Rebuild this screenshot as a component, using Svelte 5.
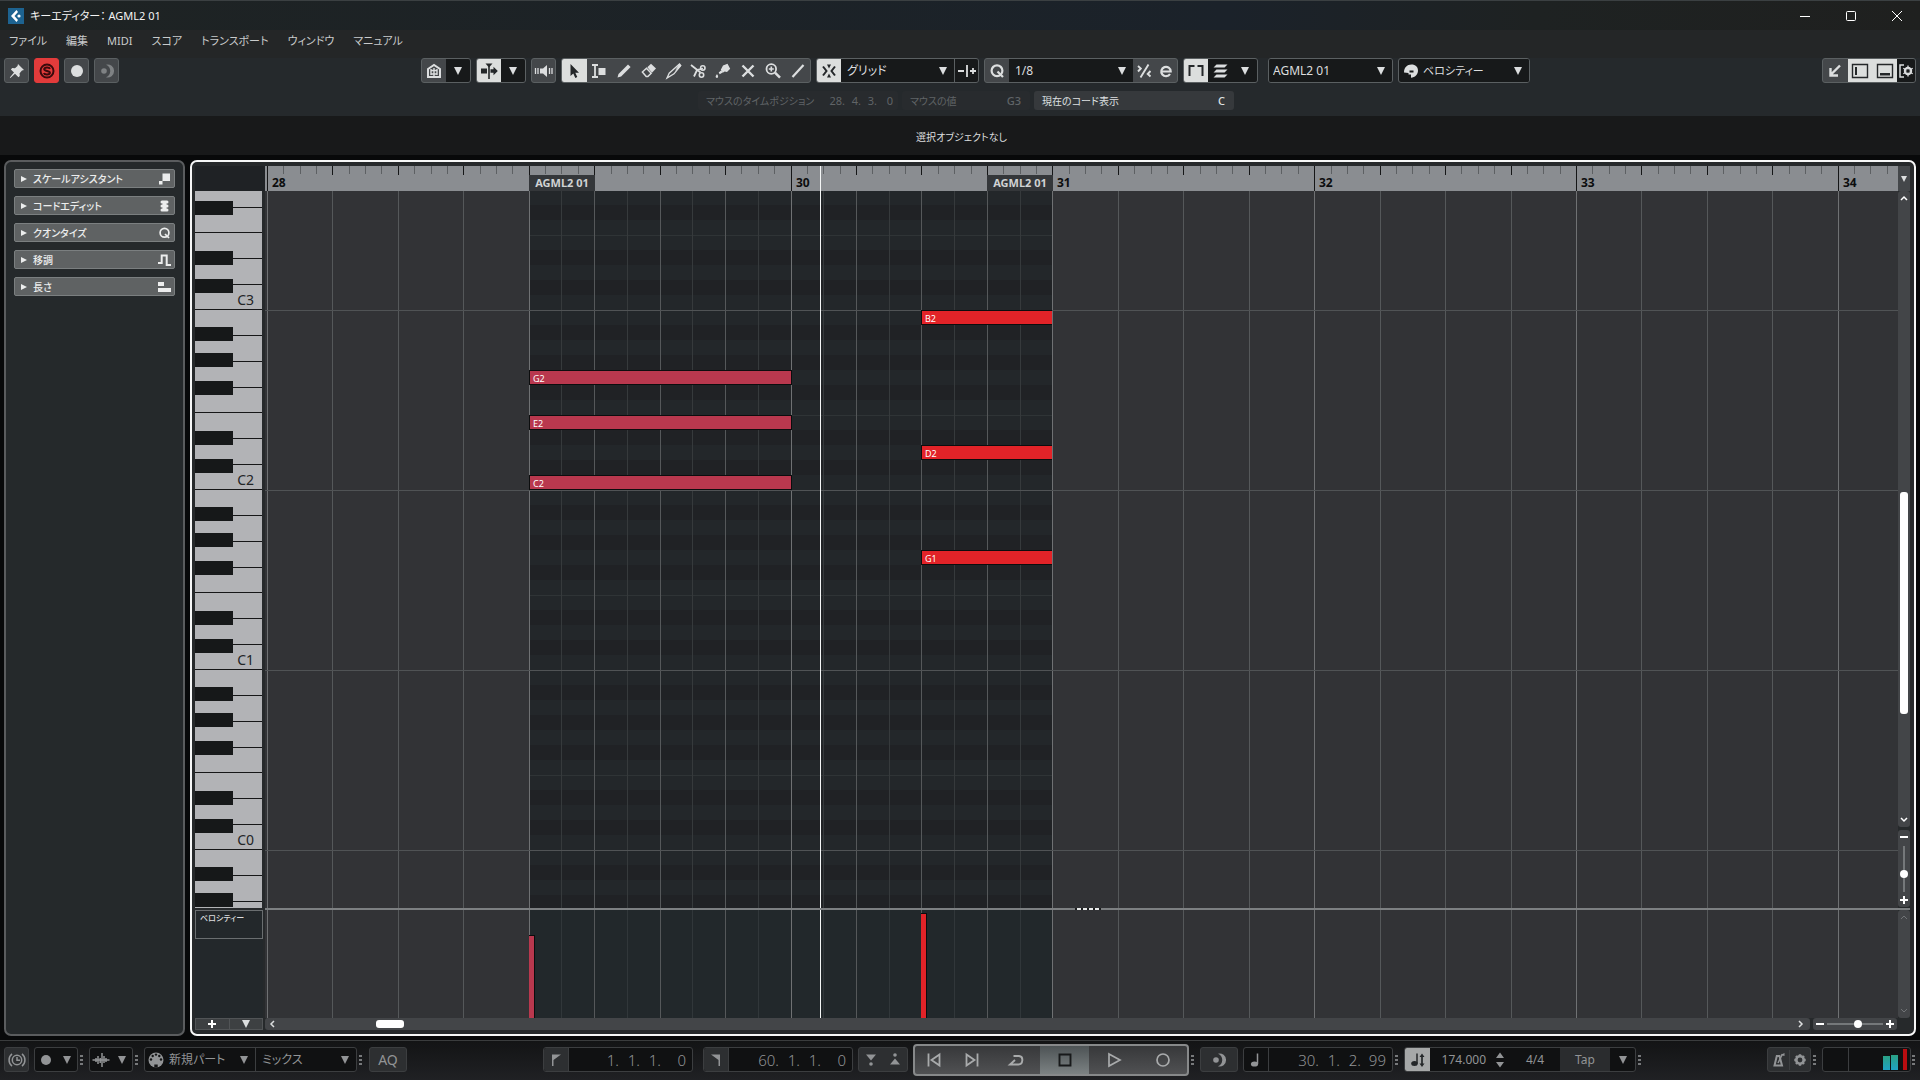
<script>
  const menus = ['ファイル', '編集', 'MIDI', 'スコア', 'トランスポート', 'ウィンドウ', 'マニュアル'];

  const sections = [
    { name: 'スケールアシスタント', icon: 'scale' },
    { name: 'コードエディット', icon: 'chord' },
    { name: 'クオンタイズ', icon: 'quantize' },
    { name: '移調', icon: 'transpose' },
    { name: '長さ', icon: 'length' }
  ];

  const tools = [
    { name: '選択', icon: 'arrow' },
    { name: 'トリム', icon: 'trim' },
    { name: '鉛筆', icon: 'pencil' },
    { name: '消しゴム', icon: 'eraser' },
    { name: 'ナイフ', icon: 'knife' },
    { name: 'はさみ', icon: 'scissors' },
    { name: 'のり', icon: 'glue' },
    { name: 'ミュート', icon: 'cross' },
    { name: 'ズーム', icon: 'zoom' },
    { name: 'ライン', icon: 'line' }
  ];

  // Time axis: x of bar 28 inside the lanes and the width of one beat
  const ORIGIN = 1.95;
  const BEAT = 65.45;
  const ROW = 15;
  const C3_BOTTOM = 119;
  const BEATS = 64;

  const beatX = (beat) => Math.round(ORIGIN + beat * BEAT);

  const partStart = beatX(4);
  const partEnd = beatX(12);
  const playhead = 555;

  const beats = Array.from({ length: BEATS }, (_, i) => i);
  const ticks = Array.from({ length: BEATS * 4 }, (_, i) => i);
  // bar 29 has no number, the part label sits there
  const bars = [28, 30, 31, 32, 33, 34];
  const halfBeats = [4, 5, 6, 7, 8, 9, 10, 11].map((b) => b + 0.5);

  const octaves = ['C3', 'C2', 'C1', 'C0', ''];
  const blackRows = [1, 3, 5, 8, 10];

  // row counts semitones down from B2
  const notes = [
    { name: 'G2', row: 4, start: 4, end: 8, soft: true },
    { name: 'E2', row: 7, start: 4, end: 8, soft: true },
    { name: 'C2', row: 11, start: 4, end: 8, soft: true },
    { name: 'B2', row: 0, start: 10, end: 12 },
    { name: 'D2', row: 9, start: 10, end: 12 },
    { name: 'G1', row: 16, start: 10, end: 12 }
  ];

  const velocities = [
    { start: 4, height: 83, soft: true },
    { start: 10, height: 105 }
  ];

  const icons = {
    pin: '<path d="M11 3l6 6-2 .6-2.400 2.600.2 2.800-1.300 1.300-3.500-3.500L3.400 17l-.6-.6L7 11.500 3.900 8.400l1.300-1.300 2.800.2L10.500 5z" fill="currentColor"/>',
    solo: '<circle cx="10" cy="10" r="6.500" fill="none" stroke="currentColor" stroke-width="2"/><path d="M13 7.800C12.300 6 7.400 6 7.200 8.200c0 2.100 5.600 1.300 5.700 3.500C12.800 14 7.500 14 6.900 12" fill="none" stroke="currentColor" stroke-width="2"/>',
    dot: '<circle cx="10" cy="10" r="6" fill="currentColor"/>',
    smallDot: '<circle cx="10" cy="10" r="5" fill="currentColor"/>',
    moon: '<path d="M9 3.700A6.500 6.500 0 1 1 9 16.300 6.800 6.800 0 0 0 9 3.700z" fill="currentColor"/><circle cx="7" cy="10" r="2.800" fill="currentColor"/>',
    house: '<path d="M4 8l6-4 6 4v8H4z" fill="none" stroke="currentColor" stroke-width="2"/><path d="M6.500 9.500h7M6.500 13h7M10 7v8M7 8v6M13 8v6" stroke="currentColor" stroke-width="1.400"/>',
    autoscroll: '<path d="M6.500 2.500h7L10 6.500z" fill="currentColor"/><path d="M10 4v14" stroke="currentColor" stroke-width="1.600"/><path d="M2 7.500h6v5H2zM11.500 8.300h3V5.800l4.300 4.200-4.300 4.200v-2.500h-3z" fill="currentColor"/>',
    speaker: '<path d="M6 7.500h3L13 4v12l-4-3.500H6z" fill="currentColor"/><path d="M1.500 7v6M4 7v6M15.500 7v6M18 7v6" stroke="currentColor" stroke-width="1.300"/>',
    arrow: '<path d="M6.500 3v12l2.800-2.600 2 4.600 2-.9-2-4.400h3.700z" fill="currentColor"/>',
    trim: '<path d="M3 4h6M3 16h6M6 4v12" stroke="currentColor" stroke-width="1.800"/><path d="M9.500 7h7v7h-7z" fill="currentColor"/>',
    pencil: '<path d="M3.500 16.500l1-3.600L14 3.400l2.600 2.600-9.500 9.500z" fill="currentColor"/>',
    eraser: '<path d="M8.300 6.200L12 2.800l5 4.700-4 4.200z" fill="currentColor"/><path d="M7.500 7.200L3.400 11l3.800 4.600h1.700l3.300-3.300z" fill="none" stroke="currentColor" stroke-width="1.500"/>',
    knife: '<path d="M3 17l2.200-4.800L15.500 3l1.300 1.500-6.800 8.300z" fill="none" stroke="currentColor" stroke-width="1.300"/><path d="M15 3l2 2-6 5z" fill="currentColor"/>',
    scissors: '<path d="M3 4l9.500 7.500M6 15.500L9 9l6-1.500" stroke="currentColor" stroke-width="1.800" fill="none"/><circle cx="14.800" cy="7" r="2.200" fill="none" stroke="currentColor" stroke-width="1.600"/><circle cx="13.500" cy="14" r="2.200" fill="none" stroke="currentColor" stroke-width="1.600"/>',
    glue: '<path d="M10 4.500l4.500-1.700 2.700 5L14 11l-2.300-.6-1.900 1.400-2-3z" fill="currentColor"/><path d="M8.300 9.300l1.400 2.300-3 1.700-1-1.900zM4 13.300c1.300 1.300 1.700 3.500 0 3.700-1.900-.1-1.600-2.300 0-3.700z" fill="currentColor"/>',
    cross: '<path d="M4.500 4.500l11 11M15.500 4.500l-11 11" stroke="currentColor" stroke-width="2.400"/>',
    zoom: '<circle cx="8.300" cy="8" r="4.800" fill="none" stroke="currentColor" stroke-width="1.800"/><path d="M12 11.700l5 5" stroke="currentColor" stroke-width="2.400"/><path d="M8.300 5.500v5M5.800 8h5" stroke="currentColor" stroke-width="1.600"/>',
    line: '<path d="M4.500 16L15.500 4" stroke="currentColor" stroke-width="2.200"/>',
    snap: '<path d="M4 5.500L7.500 10 4 14.500M16 5.500L12.500 10l3.500 4.500" fill="none" stroke="currentColor" stroke-width="2"/><path d="M8 3.500h4L10 7.500zM8 16.500h4L10 12.500z" fill="currentColor"/>',
    snapType: '<path d="M1 10h6M13 10h6M16 7v6M10 4v12" stroke="currentColor" stroke-width="1.800"/>',
    quantizeBig: '<circle cx="10" cy="9.700" r="5.400" fill="none" stroke="currentColor" stroke-width="2.200"/><path d="M10.500 10.500l5.500 5.500" stroke="currentColor" stroke-width="2.200"/>',
    iq: '<path d="M14.500 3.500l-8 13M4 5l2.800 2.500L4 10.500M16.500 10l-2.800 3 2.800 2.500" fill="none" stroke="currentColor" stroke-width="1.900"/>',
    edit: '<path d="M5.500 10.500h9.200A4.700 4.700 0 1 0 14 13" fill="none" stroke="currentColor" stroke-width="2.200"/>',
    borders: '<path d="M3.500 15V5h5M16.500 15V5h-5" fill="none" stroke="currentColor" stroke-width="2"/>',
    layers: '<path d="M6.500 3.500h11l-3 3h-11zM6.500 8.500h11l-3 3h-11zM6.500 13.500h11l-3 3h-11z" fill="currentColor"/>',
    mask: '<path d="M10.500 3.500c4 0 6.500 2.500 6.500 6 0 4-3 7-7 7.300v-3.300H7.500V12L3 11.500C3 6.500 6 3.500 10.500 3.500z" fill="currentColor"/><path d="M8.500 9.500h4v2h-4z" fill="#17191a"/>',
    openWin: '<path d="M15 4.500L6.500 13M5.500 7v7.500H13" fill="none" stroke="currentColor" stroke-width="2.400"/>',
    zoneLeft: '<path d="M2.500 3.500h15v13h-15z" fill="none" stroke="currentColor" stroke-width="1.400"/><path d="M5 6h2v8H5z" fill="currentColor"/>',
    zoneLow: '<path d="M2.500 3.500h15v13h-15z" fill="none" stroke="currentColor" stroke-width="1.400"/><path d="M5 12h10v2.500H5z" fill="currentColor"/>',
    setup: '<path d="M8 4H4v12h4" fill="none" stroke="currentColor" stroke-width="1.500"/><circle cx="12" cy="10" r="3.200" fill="none" stroke="currentColor" stroke-width="2"/><path d="M12 4.500v11M7.300 7.300l9.400 5.400M16.700 7.300l-9.400 5.400" stroke="currentColor" stroke-width="1.300"/><circle cx="12" cy="10" r="1.700" fill="#1b1d1e"/>',
    scale: '<path d="M8.500 4.500H16V12H8.500zM5 12h3.500v3.500H5z" fill="currentColor"/>',
    chord: '<rect x="6.500" y="4.500" width="8" height="3" rx="1.500" fill="currentColor"/><rect x="6.500" y="8.500" width="8" height="3" rx="1.500" fill="currentColor"/><rect x="6.500" y="12.500" width="8" height="3" rx="1.500" fill="currentColor"/><path d="M8.500 5h4v10h-4z" fill="currentColor"/>',
    quantize: '<circle cx="10.500" cy="9.800" r="4.400" fill="none" stroke="currentColor" stroke-width="1.700"/><path d="M11 11l4 4" stroke="currentColor" stroke-width="1.700"/>',
    transpose: '<path d="M4 13h3.700V5.500h5V15H17" fill="none" stroke="currentColor" stroke-width="2"/>',
    length: '<path d="M4 5h6v4H4zM4 11h13v4H4z" fill="currentColor"/>',
    clock: '<circle cx="10" cy="10" r="4.700" fill="none" stroke="currentColor" stroke-width="1.500"/><path d="M10 7v3.300h3M5 3.800a8 8 0 0 0 0 12.400M15 3.800a8 8 0 0 1 0 12.400" fill="none" stroke="currentColor" stroke-width="1.500"/>',
    wave: '<path d="M1.500 10h17M5 8v4M7 6v8M9.200 8v5M11 3v14M13 6v7M15 8v4" stroke="currentColor" stroke-width="1.500"/>',
    midi: '<circle cx="10" cy="10" r="7.500" fill="currentColor"/><g fill="#141516"><circle cx="5" cy="9.500" r="1.200"/><circle cx="6.700" cy="6" r="1.200"/><circle cx="10" cy="4.600" r="1.200"/><circle cx="13.300" cy="6" r="1.200"/><circle cx="15" cy="9.500" r="1.200"/><path d="M8.300 14.500h3.400v3H8.300z"/></g>',
    leftLoc: '<path d="M6 4.500h9L7.500 10v6H6z" fill="currentColor"/>',
    rightLoc: '<path d="M14 4.500H5l7.500 5.500v6H14z" fill="currentColor"/>',
    punchIn: '<path d="M5 4.500h10L10 10.500z" fill="currentColor"/><circle cx="10" cy="14" r="1.800" fill="currentColor"/>',
    punchOut: '<path d="M5 14.500h10L10 8.500z" fill="currentColor"/><circle cx="10" cy="5" r="1.800" fill="currentColor"/>',
    prev: '<path d="M4.500 3.500v13M15.500 4.500v11l-8-5.500z" fill="none" stroke="currentColor" stroke-width="1.800"/>',
    next: '<path d="M15.500 3.500v13M4.500 4.500v11l8-5.500z" fill="none" stroke="currentColor" stroke-width="1.800"/>',
    cycle: '<path d="M7.500 6H13c5 .5 4 8.500-.5 8.500H4l5-4.500" fill="none" stroke="currentColor" stroke-width="1.900"/>',
    stop: '<path d="M4.500 4.500h11v11h-11z" fill="none" stroke="currentColor" stroke-width="1.900"/>',
    play: '<path d="M5 4l11 6-11 6z" fill="none" stroke="currentColor" stroke-width="1.700"/>',
    record: '<circle cx="10" cy="10" r="6" fill="none" stroke="currentColor" stroke-width="1.700"/>',
    note: '<ellipse cx="8.500" cy="14" rx="3.600" ry="2.600" fill="currentColor"/><path d="M11.500 3.500V14" stroke="currentColor" stroke-width="1.500"/>',
    tempo: '<ellipse cx="6.500" cy="13.500" rx="3.300" ry="2.500" fill="currentColor"/><path d="M9 3.500v10" stroke="currentColor" stroke-width="1.500"/><path d="M14 5v10" stroke="currentColor" stroke-width="1.700"/><path d="M11.500 7L14 3.500 16.500 7zM11.500 13.500L14 17l2.500-3.500z" fill="currentColor"/>',
    spin: '<path d="M6 8l4-5.500L14 8zM6 12l4 5.500 4-5.500z" fill="currentColor"/>',
    metronome: '<path d="M6.500 15.500L8.800 6h2.700l2.500 9.500z" fill="none" stroke="currentColor" stroke-width="2"/><path d="M10 13l4.500-9" stroke="currentColor" stroke-width="1.500"/><path d="M12.500 5l4-2v3z" fill="currentColor"/>',
    gear: '<circle cx="10" cy="10" r="3.700" fill="none" stroke="currentColor" stroke-width="2.600"/><path d="M10 4.300v2.400M10 13.300v2.400M4.300 10h2.400M13.300 10h2.400M6 6l1.600 1.600M12.400 12.400L14 14M14 6l-1.600 1.600M7.600 12.400L6 14" stroke="currentColor" stroke-width="2.400"/>'
  };

  let hZoom = 56;
  let vZoom = 65;
</script>

{#snippet icon(name)}
  <svg class="icon" width="20" height="20" viewBox="0 0 20 20" aria-hidden="true">{@html icons[name]}</svg>
{/snippet}

{#snippet caret()}
  <svg class="caret" width="8" height="8" viewBox="0 0 8 8" aria-hidden="true"><path d="M0 0h8L4 8z" fill="currentColor" /></svg>
{/snippet}

{#snippet grip()}
  <span class="grip"><i></i><i></i><i></i></span>
{/snippet}

{#snippet beatLines(halfColor)}
  {#each halfBeats as b}
    <rect x={beatX(b)} y="0" width="1" height="100%" fill={halfColor} />
  {/each}
  {#each beats as b}
    <rect x={beatX(b)} y="0" width="1" height="100%" fill={b % 4 === 0 ? '#6f7173' : '#55585a'} />
  {/each}
{/snippet}

<div class="app">
  <header class="titlebar">
    <svg width="16" height="16" viewBox="0 0 16 16" aria-hidden="true">
      <rect width="16" height="16" fill="#1d6390" />
      <path d="M8.500 2L3 8l5.500 6 1.500-2L6.500 8 10 4z" fill="#fff" />
      <circle cx="11" cy="8" r="1.600" fill="#fff" />
    </svg>
    <h1>キーエディター： AGML2 01</h1>
    <div class="window-buttons">
      <button aria-label="最小化"><svg width="12" height="12" viewBox="0 0 12 12"><path d="M1 6.500h10" stroke="#fff" /></svg></button>
      <button aria-label="最大化"><svg width="12" height="12" viewBox="0 0 12 12"><rect x="1.500" y="1.500" width="9" height="9" rx="1" fill="none" stroke="#fff" /></svg></button>
      <button aria-label="閉じる"><svg width="12" height="12" viewBox="0 0 12 12"><path d="M1 1l10 10M11 1L1 11" stroke="#fff" /></svg></button>
    </div>
  </header>

  <nav class="menubar">
    {#each menus as menu}
      <button>{menu}</button>
    {/each}
  </nav>

  <div class="toolbar">
    <div class="tool-left">
      <button class="box" aria-label="ピン">{@render icon('pin')}</button>
      <button class="box solo" aria-label="ソロ">{@render icon('solo')}</button>
      <button class="box" aria-label="録音">{@render icon('dot')}</button>
      <button class="box dim" aria-label="レトロスペクティブ録音">{@render icon('moon')}</button>
    </div>

    <div class="tool-center">
      <div class="group pair">
        <button aria-label="表示">{@render icon('house')}</button>
        <button class="dark" aria-label="表示メニュー">{@render caret()}</button>
      </div>
      <div class="group pair">
        <button class="on" aria-label="自動スクロール">{@render icon('autoscroll')}</button>
        <button class="dark" aria-label="スクロールメニュー">{@render caret()}</button>
      </div>
      <button class="box" aria-label="試聴">{@render icon('speaker')}</button>
      <div class="group tools">
        {#each tools as tool, i}
          <button class:on={i === 0} aria-label={tool.name}>{@render icon(tool.icon)}</button>
        {/each}
      </div>
      <div class="group snap">
        <button class="on" aria-label="スナップ">{@render icon('snap')}</button>
        <div class="picker">
          <select aria-label="スナップタイプ"><option>グリッド</option></select>
          {@render caret()}
        </div>
        <button class="dark divided" aria-label="グリッドタイプ">{@render icon('snapType')}</button>
      </div>
      <div class="group quant">
        <button aria-label="クオンタイズ適用">{@render icon('quantizeBig')}</button>
        <div class="picker">
          <select aria-label="クオンタイズ値"><option>1/8</option></select>
          {@render caret()}
        </div>
        <button aria-label="ソフトクオンタイズ">{@render icon('iq')}</button>
        <button aria-label="クオンタイズパネル">{@render icon('edit')}</button>
      </div>
      <div class="group parts">
        <button class="on" aria-label="パート境界">{@render icon('borders')}</button>
        <button class="dark" aria-label="アクティブパート">{@render icon('layers')}</button>
        <button class="dark" aria-label="パートメニュー">{@render caret()}</button>
      </div>
      <div class="group part-name">
        <div class="picker">
          <select aria-label="パート"><option>AGML2 01</option></select>
          {@render caret()}
        </div>
      </div>
      <div class="group colors">
        <span class="lead">{@render icon('mask')}</span>
        <div class="picker tight">
          <select aria-label="カラー"><option>ベロシティー</option></select>
          {@render caret()}
        </div>
      </div>
    </div>

    <div class="group zones">
      <button aria-label="別ウィンドウ">{@render icon('openWin')}</button>
      <button class="on" aria-label="左ゾーン">{@render icon('zoneLeft')}</button>
      <button class="on" aria-label="下ゾーン">{@render icon('zoneLow')}</button>
      <button class="dark setup" aria-label="設定">{@render icon('setup')}</button>
    </div>
  </div>

  <div class="readouts">
    <div class="readout time"><span>マウスのタイムポジション</span><span class="fields"><b>28.</b><b>4.</b><b>3.</b><b>0</b></span></div>
    <div class="readout pitch"><span>マウスの値</span><span class="value">G3</span></div>
    <div class="readout chord"><span>現在のコード表示</span><span class="value">C</span></div>
  </div>

  <div class="infoline">選択オブジェクトなし</div>

  <main>
    <aside>
      {#each sections as section}
        <button class="section">
          <svg width="6" height="6" viewBox="0 0 6 6" aria-hidden="true"><path d="M0 0l6 3-6 3z" fill="currentColor" /></svg>
          <span>{section.name}</span>
          {@render icon(section.icon)}
        </button>
      {/each}
    </aside>

    <section class="editor">
      <div class="corner"></div>
      <div class="ruler">
        <svg class="fill" aria-hidden="true">
          {#each ticks as t}
            <rect x={beatX(t / 4)} y="0" width="1" height={t % 16 === 0 ? 25 : t % 4 === 0 ? 9 : 8} fill={t % 4 === 0 ? '#151617' : '#5d6063'} />
          {/each}
        </svg>
        {#each bars as bar}
          <span class="bar" style:left="{beatX((bar - 28) * 4) + 5}px">{bar}</span>
        {/each}
        <span class="part" style:left="{partStart}px">AGML2 01</span>
        <span class="part" style:left="{beatX(11)}px">AGML2 01</span>
        <i class="playhead" style:left="{playhead}px"></i>
      </div>
      <button class="ruler-menu" aria-label="ルーラー">{@render caret()}</button>

      <div class="keyboard">
        <div class="keys">
          {#each octaves as octave}
            <div class="octave">
              {#each ['B', 'A', 'G', 'F', 'E', 'D', 'C'] as key}
                <div class="white" class:short={key === 'F' || key === 'C'}>{key === 'C' ? octave : ''}</div>
              {/each}
              {#each [17, 43, 71, 121, 149] as top}
                <i class="black" style:top="{top}px"></i>
              {/each}
            </div>
          {/each}
        </div>
      </div>
      <div class="lane">
        <svg class="fill" aria-hidden="true">
          <rect x={partStart} y="0" width={partEnd - partStart} height="100%" fill="#23272a" />
          {#each octaves as _, o}
            {#each blackRows as r}
              <rect x={partStart} y={C3_BOTTOM + (o - 1) * 180 + r * ROW} width={partEnd - partStart} height={ROW} fill="#202225" />
            {/each}
            <rect x={partStart} y={C3_BOTTOM - 75 + o * 180} width={partEnd - partStart} height="1" fill="#2f3436" />
          {/each}
          {@render beatLines('#363a3c')}
          {#each octaves as _, o}
            <rect x="0" y={C3_BOTTOM + o * 180} width="100%" height="1" fill="#505355" />
          {/each}
        </svg>
        {#each notes as note}
          <div
            class="note"
            class:soft={note.soft}
            style:left="{beatX(note.start)}px"
            style:top="{C3_BOTTOM + note.row * ROW}px"
            style:width="{beatX(note.end) - beatX(note.start) + (note.soft ? 1 : 0)}px"
          >{note.name}</div>
        {/each}
        <i class="playhead" style:left="{playhead}px"></i>
      </div>
      <div class="side">
        <div class="vscroll">
          <svg width="8" height="6" viewBox="0 0 8 6"><path d="M1 5l3-3 3 3" fill="none" stroke="currentColor" stroke-width="1.500" /></svg>
          <i class="thumb"></i>
          <svg width="8" height="6" viewBox="0 0 8 6"><path d="M1 1l3 3 3-3" fill="none" stroke="currentColor" stroke-width="1.500" /></svg>
        </div>
        <div class="vzoom">
          <button class="minus" aria-label="縦ズームアウト"></button>
          <input type="range" aria-label="縦ズーム" bind:value={vZoom} />
          <button class="minus plus" aria-label="縦ズームイン"></button>
        </div>
      </div>

      <div class="splitter"><span><i></i><i></i><i></i><i></i></span></div>

      <div class="lane-head"><div class="lane-name">ベロシティー</div></div>
      <div class="lane">
        <svg class="fill" aria-hidden="true">
          <rect x={partStart} y="0" width={partEnd - partStart} height="100%" fill="#22282b" />
          {@render beatLines('#31373a')}
        </svg>
        {#each velocities as v}
          <i class="velocity" class:soft={v.soft} style:left="{beatX(v.start)}px" style:height="{v.height}px"></i>
        {/each}
        <i class="playhead" style:left="{playhead}px"></i>
      </div>
      <div class="vscroll off">
        <svg width="8" height="6" viewBox="0 0 8 6"><path d="M1 5l3-3 3 3" fill="none" stroke="currentColor" /></svg>
        <svg width="8" height="6" viewBox="0 0 8 6"><path d="M1 1l3 3 3-3" fill="none" stroke="currentColor" /></svg>
      </div>

      <div class="lane-buttons">
        <button aria-label="レーン追加"><span class="minus plus"></span></button>
        <button aria-label="レーンメニュー">{@render caret()}</button>
      </div>
      <div class="bottom">
        <div class="hscroll">
          <svg width="6" height="8" viewBox="0 0 6 8"><path d="M5 1L2 4l3 3" fill="none" stroke="currentColor" stroke-width="1.500" /></svg>
          <i class="thumb"></i>
          <svg width="6" height="8" viewBox="0 0 6 8"><path d="M1 1l3 3-3 3" fill="none" stroke="currentColor" stroke-width="1.500" /></svg>
        </div>
        <div class="hzoom">
          <button class="minus" aria-label="横ズームアウト"></button>
          <input type="range" aria-label="横ズーム" bind:value={hZoom} />
          <button class="minus plus" aria-label="横ズームイン"></button>
        </div>
      </div>
    </section>
  </main>

  <footer>
    <div class="foot-left">
      <button class="cell lit" aria-label="遅延補正">{@render icon('clock')}</button>
      <div class="cell duo">
        <button aria-label="録音モード">{@render icon('smallDot')}</button>
        <button aria-label="録音モードメニュー">{@render caret()}</button>
      </div>
      {@render grip()}
      <div class="cell duo">
        <button aria-label="オーディオ録音">{@render icon('wave')}</button>
        <button aria-label="オーディオ録音メニュー">{@render caret()}</button>
      </div>
      {@render grip()}
      <div class="cell rec-mode">
        {@render icon('midi')}
        <div class="picker new-part">
          <select aria-label="MIDI 録音モード"><option>新規パート</option></select>
          {@render caret()}
        </div>
        <div class="picker mix">
          <select aria-label="MIDI サイクル録音"><option>ミックス</option></select>
          {@render caret()}
        </div>
      </div>
      {@render grip()}
      <button class="cell lit aq">AQ</button>
    </div>

    <div class="foot-center">
      <div class="cell locator">
        <button class="lit" aria-label="左ロケーター">{@render icon('leftLoc')}</button>
        <span class="fields"><b>1.</b><b>1.</b><b>1.</b><b>0</b></span>
      </div>
      <div class="cell locator">
        <button class="lit" aria-label="右ロケーター">{@render icon('rightLoc')}</button>
        <span class="fields"><b>60.</b><b>1.</b><b>1.</b><b>0</b></span>
      </div>
      <div class="cell lit punch">
        <button aria-label="パンチイン">{@render icon('punchIn')}</button>
        <button aria-label="パンチアウト">{@render icon('punchOut')}</button>
      </div>
      <div class="transport">
        <button class="skip" aria-label="先頭へ">{@render icon('prev')}</button>
        <button class="skip" aria-label="末尾へ">{@render icon('next')}</button>
        <button aria-label="サイクル">{@render icon('cycle')}</button>
        <button class="active" aria-label="停止">{@render icon('stop')}</button>
        <button aria-label="再生">{@render icon('play')}</button>
        <button aria-label="録音">{@render icon('record')}</button>
      </div>
      {@render grip()}
      <button class="cell lit retro" aria-label="レトロスペクティブ">{@render icon('moon')}</button>
      <div class="cell locator position">
        <button aria-label="表示形式">{@render icon('note')}</button>
        <span class="fields"><b>30.</b><b>1.</b><b>2.</b><b>99</b></span>
      </div>
      {@render grip()}
      <div class="cell tempo">
        <button class="on" aria-label="テンポトラック">{@render icon('tempo')}</button>
        <span class="bpm">174.000</span>
        {@render icon('spin')}
        <span class="sign">4/4</span>
        <button class="tap">Tap</button>
        <button class="tap-menu" aria-label="タップメニュー">{@render caret()}</button>
      </div>
      {@render grip()}
    </div>

    <div class="foot-right">
      <div class="cell lit duo click">
        <button aria-label="メトロノーム">{@render icon('metronome')}</button>
        <button aria-label="メトロノーム設定">{@render icon('gear')}</button>
      </div>
      {@render grip()}
      <div class="cell meter">
        <i class="level low"></i><i class="level"></i><i class="clip"></i>
      </div>
      {@render grip()}
    </div>
  </footer>
</div>

<style>
  :global(body) {
    background: #08090a;
  }

  .app {
    display: flex;
    flex-direction: column;
    height: 100vh;
    overflow: hidden;
    color: #dcdedf;
    font-family: "Noto Sans", "Noto Sans CJK JP", sans-serif;
    font-size: 11px;
    line-height: 16px;
    font-feature-settings: "palt";
  }

  .app * {
    box-sizing: border-box;
  }

  button,
  select {
    margin: 0;
    padding: 0;
    border: 0;
    background: none;
    color: inherit;
    font: inherit;
    font-feature-settings: inherit;
  }

  button {
    display: flex;
    align-items: center;
    justify-content: center;
  }

  svg {
    display: block;
    flex: none;
  }

  .titlebar {
    display: flex;
    align-items: center;
    flex: none;
    height: 30px;
    padding-left: 8px;
    gap: 6px;
    border-top: 1px solid #3b4042;
    background: linear-gradient(90deg, #1e2323, #1b222a 64%, #1e2222 80%, #1f201f);
    color: #f4f4f4;
  }

  h1 {
    flex: 1;
    margin: 0;
    font-size: 11px;
    font-weight: 400;
  }

  .window-buttons {
    display: flex;
  }

  .window-buttons button {
    width: 46px;
    height: 29px;
  }

  .menubar {
    display: flex;
    flex: none;
    height: 28px;
    padding: 3px 9px 0;
    gap: 19px;
    background: #242627;
    color: #c9cbcc;
  }

  .menubar button {
    height: 16px;
  }

  .toolbar {
    display: flex;
    flex: none;
    align-items: center;
    justify-content: space-between;
    padding: 0 4px;
    height: 25px;
    background: #25292c;
  }

  .tool-left,
  .tool-center {
    display: flex;
    gap: 5px;
  }

  .tool-left {
    padding-right: 10px;
  }

  .box,
  .group {
    height: 25px;
    border: 1px solid #5b6062;
    border-radius: 3px;
    background: #44474a;
    overflow: hidden;
  }

  .box {
    width: 25px;
  }

  .solo {
    border-color: #e23b3b;
    background: #e23b3b;
    color: #3a0a0c;
  }

  .dim {
    color: #7f8284;
  }

  .group {
    display: flex;
  }

  .group button {
    flex: 1;
    min-width: 0;
  }

  .on {
    background: #dcdedd;
    color: #242729;
  }

  .dark {
    background: #17191a;
  }

  .pair {
    width: 50px;
  }

  .tools {
    width: 250px;
  }

  .snap {
    width: 163px;
  }

  .quant {
    width: 194px;
  }

  .parts {
    width: 75px;
    margin-right: 5px;
  }

  .part-name {
    width: 125px;
  }

  .colors {
    width: 132px;
    background: #17191a;
  }

  .zones {
    width: 94px;
  }

  .group .setup {
    flex: 0 0 18px;
  }

  .snap button,
  .quant button {
    flex: 0 0 24px;
  }

  .quant .picker ~ button {
    flex-basis: 22px;
  }

  .group .divided {
    border-left: 1px solid #5b6062;
  }

  .lead {
    display: flex;
    align-items: center;
    padding-left: 2px;
  }

  /* select and its caret share one grid cell */
  .picker {
    display: grid;
    flex: 1;
    min-width: 0;
    align-items: center;
    background: #17191a;
  }

  .picker select,
  .picker .caret {
    grid-area: 1 / 1;
  }

  .picker select {
    width: 100%;
    height: 100%;
    padding-left: 6px;
    appearance: none;
    font-size: 12px;
  }

  .picker .caret {
    justify-self: end;
    margin-right: 7px;
    pointer-events: none;
  }

  .picker.tight select {
    padding-left: 2px;
    font-size: 11px;
  }

  .part-name .picker select {
    padding-left: 4px;
  }

  .readouts {
    display: flex;
    flex: none;
    justify-content: center;
    gap: 4px;
    height: 33px;
    padding: 8px 0 6px 12px;
    background: #25292c;
  }

  .readout {
    display: flex;
    align-items: center;
    justify-content: space-between;
    height: 19px;
    padding: 0 9px 0 8px;
    border-radius: 3px;
    background: #282b2e;
    color: #606467;
    font-size: 10px;
  }

  .time {
    width: 200px;
    padding-right: 5px;
  }

  .pitch {
    width: 128px;
  }

  .readout.chord {
    width: 200px;
    background: #36393c;
    color: #dfe1e2;
  }

  .value {
    font-size: 11px;
    font-weight: 500;
  }

  .fields {
    display: flex;
  }

  .fields b {
    width: 16px;
    font-size: 11px;
    font-weight: 400;
    text-align: right;
  }

  .infoline {
    display: flex;
    flex: none;
    align-items: center;
    justify-content: center;
    height: 39px;
    padding: 3px 0 0 3px;
    background: #18191a;
    font-size: 10px;
  }

  main {
    display: flex;
    flex: 1;
    min-height: 0;
    gap: 5px;
    padding: 5px 4px 4px;
    background: #08090a;
  }

  aside {
    display: flex;
    flex: none;
    flex-direction: column;
    gap: 8px;
    width: 181px;
    padding: 7px 8px;
    border: 2px solid #5a5c5e;
    border-radius: 7px;
    background: #25292b;
  }

  .section {
    gap: 6px;
    height: 19px;
    padding: 0 0 0 6px;
    border: 1px solid #7b7f80;
    border-radius: 2px;
    background: #5f6263;
    color: #eceded;
    font-size: 10px;
    font-weight: 500;
  }

  .section span {
    flex: 1;
    text-align: left;
  }

  .editor {
    display: grid;
    flex: 1;
    min-width: 0;
    grid-template-columns: 70px minmax(0, 1fr) 12px;
    grid-template-rows: 25px minmax(0, 1fr) 2px 108px 12px;
    padding: 4px 4px 4px 3px;
    border: 2px solid #f6f7f7;
    border-radius: 7px;
    background: #26292b;
  }

  .corner {
    background: #1f2225;
  }

  .ruler {
    position: relative;
    overflow: hidden;
    background: #8a8d91;
    color: #0c0d0e;
    font-size: 12px;
    font-weight: 700;
  }

  .fill {
    width: 100%;
    height: 100%;
  }

  .bar {
    position: absolute;
    top: 9px;
  }

  .part {
    position: absolute;
    top: 9px;
    width: 66px;
    height: 16px;
    background: #34373a;
    color: #d0d2d3;
    font-size: 11px;
    text-align: center;
  }

  .playhead {
    position: absolute;
    top: 0;
    width: 1px;
    height: 100%;
    background: #f4f6f6;
  }

  .ruler-menu {
    background: #44474a;
  }

  .ruler-menu .caret {
    width: 6px;
  }

  .keyboard {
    overflow: hidden;
    width: 67px;
  }

  .keys {
    margin-top: -61px;
  }

  .octave {
    position: relative;
    height: 180px;
  }

  .white {
    height: 26px;
    padding: 7px 8px 0 0;
    border-bottom: 1px solid #151617;
    background: #b2b3b6;
    color: #232527;
    font-size: 14px;
    text-align: right;
  }

  .white.short {
    height: 25px;
  }

  .black {
    position: absolute;
    left: 0;
    width: 38px;
    height: 14px;
    background: #161819;
  }

  .lane {
    position: relative;
    overflow: hidden;
    background: #323336;
  }

  .note {
    position: absolute;
    height: 15px;
    padding-left: 3px;
    border: 1px solid #0c0d0e;
    border-right: 0;
    background: #e22328;
    color: #fff;
    font-size: 9px;
    line-height: 15px;
  }

  .note.soft {
    border-right: 1px solid #0c0d0e;
    background: #b9384e;
  }

  .side {
    display: flex;
    flex-direction: column;
    gap: 3px;
    min-height: 0;
    padding-bottom: 1px;
  }

  .vscroll {
    display: flex;
    flex: 1;
    flex-direction: column;
    align-items: center;
    min-height: 0;
    padding: 4px 0;
    border-radius: 3px;
    background: #434548;
    color: #fff;
  }

  .vscroll svg:last-child {
    margin-top: auto;
  }

  .vscroll .thumb {
    width: 8px;
    height: 222px;
    margin-top: 291px;
    border-radius: 3px;
    background: #fff;
  }

  .vscroll.off {
    color: #707376;
  }

  .vzoom,
  .hzoom {
    display: flex;
    flex: none;
    align-items: center;
    justify-content: space-between;
    border-radius: 3px;
    background: #434548;
  }

  .vzoom {
    flex-direction: column;
    height: 77px;
    padding: 2px 0;
  }

  .hzoom {
    width: 84px;
    padding: 0 2px;
  }

  .minus {
    position: relative;
    width: 10px;
    height: 10px;
  }

  .minus::before,
  .plus::after {
    content: "";
    position: absolute;
    inset: 4px 1px;
    background: #fff;
  }

  .plus::after {
    inset: 1px 4px;
  }

  input[type="range"] {
    width: 56px;
    height: 10px;
    margin: 0;
    appearance: none;
    background: linear-gradient(#75787a, #75787a) center / 100% 2px no-repeat;
  }

  .vzoom input[type="range"] {
    width: 10px;
    height: 46px;
    writing-mode: vertical-lr;
    background-size: 2px 100%;
  }

  input[type="range"]::-webkit-slider-thumb {
    width: 8px;
    height: 8px;
    appearance: none;
    border-radius: 50%;
    background: #fff;
  }

  .splitter {
    display: flex;
    grid-column: 2 / 4;
    justify-content: center;
    background: #7d8082;
  }

  .splitter span {
    display: flex;
    gap: 2px;
    padding: 0 2px;
    background: #1d1f20;
  }

  .splitter i {
    width: 4px;
    background: #e8eaea;
  }

  .lane-head {
    grid-column: 1;
    width: 68px;
    background: #23282b;
  }

  .lane-name {
    height: 29px;
    padding-left: 4px;
    border: 1px solid #6a6e70;
    font-size: 8px;
    line-height: 14px;
    font-weight: 500;
  }

  .velocity {
    position: absolute;
    bottom: 0;
    width: 6px;
    border: 1px solid #0c0d0e;
    border-width: 1px 1px 0 0;
    background: #e22328;
  }

  .velocity.soft {
    background: #b9384e;
  }

  .lane-buttons {
    display: flex;
    width: 68px;
    border: 1px solid #515456;
    background: #3d4042;
  }

  .lane-buttons button {
    flex: 1;
  }

  .lane-buttons button + button {
    border-left: 1px solid #515456;
  }

  .bottom {
    display: flex;
    grid-column: 2;
    gap: 3px;
    padding-right: 1px;
  }

  .hscroll {
    display: flex;
    flex: 1;
    align-items: center;
    padding: 0 6px 0 4px;
    border-radius: 3px;
    background: #434548;
  }

  .hscroll svg:last-child {
    margin-left: auto;
  }

  .hscroll .thumb {
    width: 28px;
    height: 8px;
    margin-left: 101px;
    border-radius: 3px;
    background: #fff;
  }

  footer {
    display: flex;
    flex: none;
    align-items: center;
    justify-content: space-between;
    height: 40px;
    padding: 0 4px 2px;
    border-top: 1px solid #3a3c3d;
    background: linear-gradient(#131415, #202124);
    color: #929496;
    font-size: 12px;
  }

  .foot-left,
  .foot-center,
  .foot-right {
    display: flex;
    align-items: center;
  }

  .foot-center {
    padding-left: 16px;
  }

  .cell {
    display: flex;
    align-items: center;
    height: 25px;
    border: 1px solid #3c3e40;
    border-radius: 3px;
    background: #101112;
    overflow: hidden;
  }

  button.cell {
    width: 25px;
  }

  .lit {
    background: #2d2f31;
  }

  .duo {
    width: 44px;
  }

  .duo button {
    flex: 1;
    min-width: 0;
  }

  .foot-left .duo:nth-child(2) {
    margin-left: 5px;
  }

  .grip {
    display: flex;
    flex-direction: column;
    align-items: center;
    gap: 2px;
    width: 11px;
    padding-right: 5px;
  }

  .grip i {
    width: 3px;
    height: 2px;
    background: #77797b;
  }

  .rec-mode {
    width: 213px;
    padding-left: 1px;
  }

  .cell .picker {
    height: 23px;
    background: none;
  }

  .cell .picker select {
    padding-left: 3px;
  }

  .cell .mix {
    flex: 0 0 101px;
    border-left: 1px solid #3c3e40;
  }

  .cell .mix select {
    padding-left: 6px;
  }

  button.aq {
    width: 38px;
    margin-left: 1px;
    font-size: 14px;
  }

  .locator {
    justify-content: space-between;
    width: 150px;
    margin-right: 10px;
    padding-right: 6px;
  }

  .locator + .punch {
    margin-left: -5px;
  }

  .locator button {
    width: 25px;
    height: 23px;
    border-right: 1px solid #3c3e40;
  }

  .cell .fields b {
    width: 21px;
    font-size: 15px;
    font-weight: 300;
  }

  .locator .fields b:first-child {
    width: 32px;
  }

  .cell .fields b:last-child {
    width: 25px;
  }

  .punch {
    width: 50px;
    margin-right: 5px;
  }

  .punch button {
    flex: 1;
  }

  .transport {
    display: flex;
    width: 276px;
    height: 32px;
    border: 2px solid #87898a;
    border-radius: 4px;
    background: linear-gradient(#37383a, #505153);
    color: #a9abac;
  }

  .transport button {
    flex: 1;
  }

  .transport .skip {
    flex: 0 0 38px;
  }

  .transport .active {
    background: linear-gradient(#4d5355, #7c8283);
    color: #17191a;
  }

  button.retro {
    width: 38px;
    margin-right: 5px;
  }

  .position {
    margin-right: 0;
  }

  .tempo {
    width: 232px;
  }

  .cell .on {
    width: 25px;
    height: 23px;
    background: #a6a8a8;
  }

  .bpm {
    width: 60px;
    padding-right: 4px;
    text-align: right;
  }

  .sign {
    flex: 1;
    text-align: center;
  }

  .tap {
    width: 50px;
    height: 23px;
    background: #2a2c2e;
  }

  .tap-menu {
    width: 25px;
    height: 23px;
  }

  .click button + button {
    border-left: 1px solid #3c3e40;
  }

  .meter {
    align-items: flex-end;
    justify-content: flex-end;
    gap: 1px;
    width: 89px;
    padding: 1px 3px 1px 0;
    background: linear-gradient(#3c3e40, #3c3e40) 25px 0 / 1px 100% no-repeat #101112;
  }

  .level {
    width: 7px;
    height: 15px;
    background: linear-gradient(#2aa184, #1fa3c4);
  }

  .level.low {
    height: 14px;
  }

  .clip {
    width: 4px;
    height: 21px;
    margin-left: 4px;
    background: #b90d10;
  }

  .foot-right .grip:last-child {
    width: 5px;
    padding-right: 0;
  }
</style>
